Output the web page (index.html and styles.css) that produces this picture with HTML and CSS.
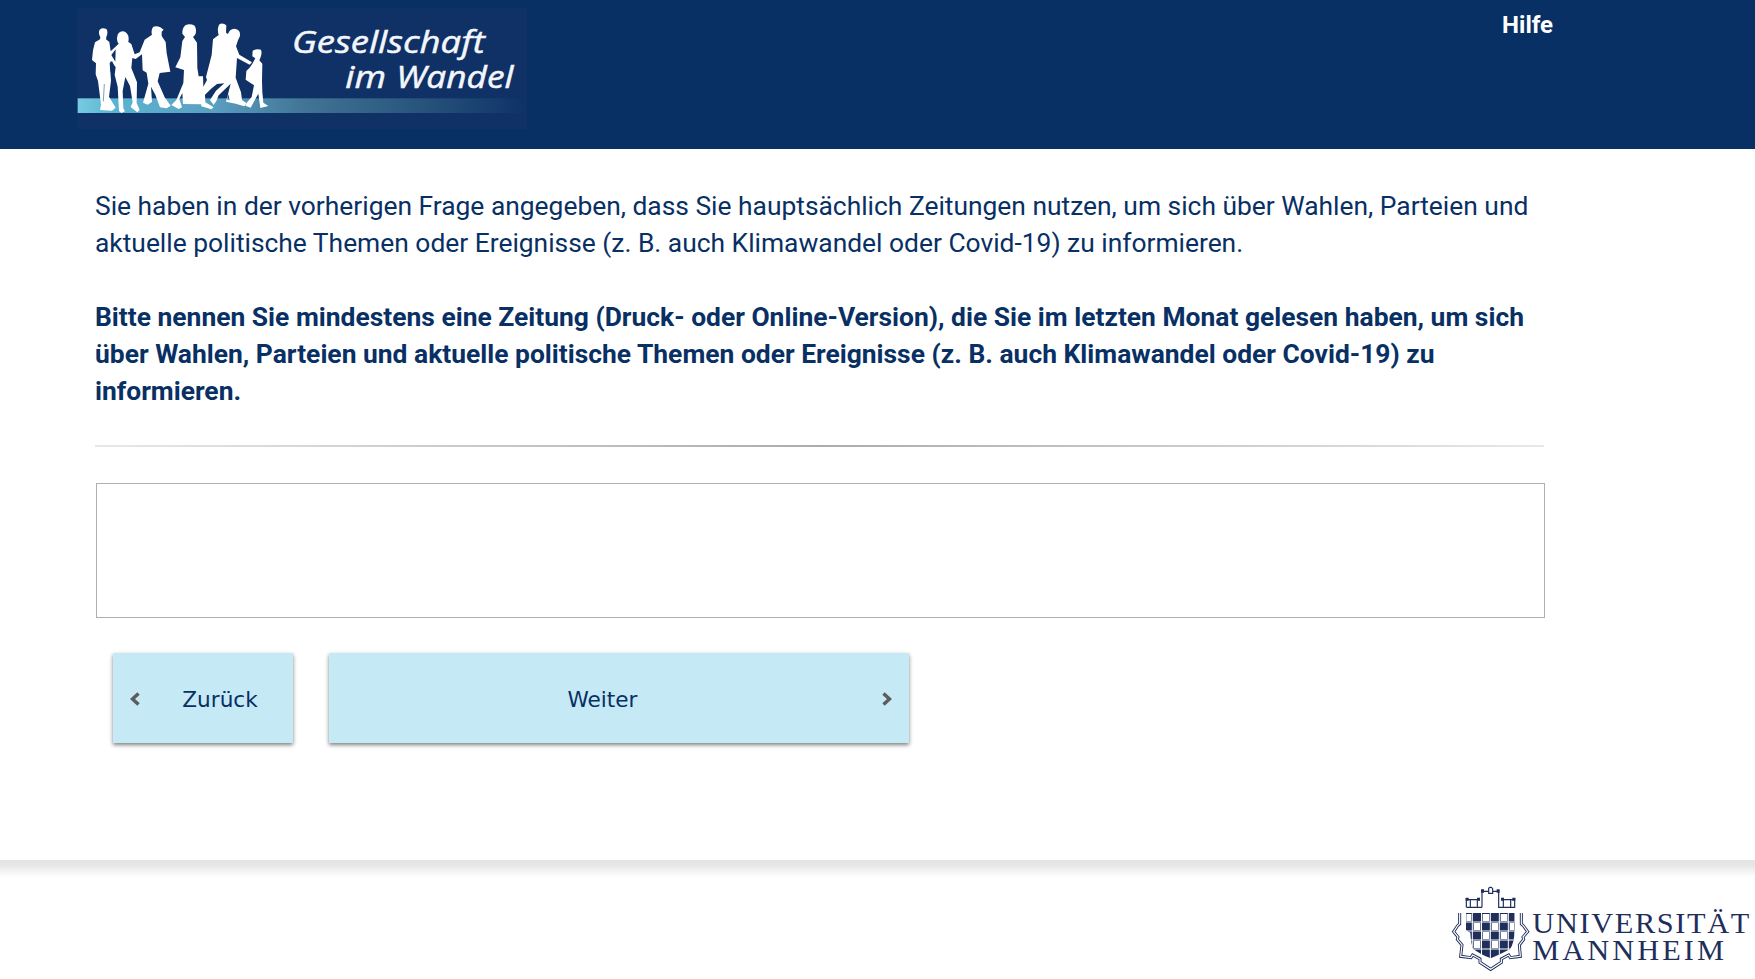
FILE: index.html
```html
<!DOCTYPE html>
<html lang="de">
<head>
<meta charset="utf-8">
<title>Gesellschaft im Wandel</title>
<link rel="stylesheet" href="styles.css">
</head>
<body>
<header class="header">
  <svg class="logo" viewBox="21 24 1350 363" role="img" aria-label="Gesellschaft im Wandel">
    <defs>
      <linearGradient id="band" x1="0" x2="1" y1="0" y2="0">
        <stop offset="0" stop-color="#76cbe1"/>
        <stop offset=".08" stop-color="#5cb4d0"/>
        <stop offset=".3" stop-color="#5a9fc1"/>
        <stop offset=".5" stop-color="#427596"/>
        <stop offset=".78" stop-color="#26527a"/>
        <stop offset="1" stop-color="#0f3166"/>
      </linearGradient>
    </defs>
    <rect x="21" y="24" width="1350" height="363" fill="#0f3166"/>
    <rect x="23" y="295" width="1348" height="44" fill="url(#band)"/>
    <g class="people">
      <path d="M90 118L91 112Q84 98 89 89Q98 81 110 88Q115 98 109 111L108 118L118 126L122 154L139 138L146 131Q138 122 143 104Q151 91 165 95Q179 103 175 126L184 132L194 163L209 157L224 119L246 104Q242 90 250 80Q260 76 271 82L281 89L275 95L275 108L287 126L290 160L301 215L269 219L263 244L284 292L302 317L290 325L270 322L256 284L243 260L246 306L233 314L219 308L235 251L230 218L218 211L216 163L197 177L187 174L184 204L201 247L200 309L209 330L202 337L182 321L188 307L180 258L166 231L158 273L160 325L165 334L154 339L147 333L143 260L134 224L137 201L121 184L121 212L123 242L117 290L137 323L126 332L90 330L93 314L84 243L77 223L78 190L66 180L69 151L75 127Z"/>
      <path d="M345 111L337 101Q336 85 346 76Q359 69 374 77Q382 91 375 105L369 111L381 128L382 204L386 229L399 229L400 260L411 240L408 231L425 165L429 118L446 105Q440 83 449 72Q460 68 469 76L468 98L474 102Q478 87 493 86Q513 89 510 108L504 121L498 139L508 164L546 187L539 194L501 174L497 233L513 277L516 300L530 310L523 319L481 307L474 281L472 300L490 302L489 310L468 305L482 251L446 286L439 303L431 315L420 300L438 272L463 250L441 252L425 265L405 284L406 307L431 322L424 328L394 319L393 313L339 312L337 279L328 297L336 322L326 327L304 315L319 300L340 249L342 210L316 202L331 172L337 123Z"/>
      <path d="M548 152Q557 146 573 149Q577 160 571 174L568 181L577 191L576 243L577 276L580 308L595 318L571 324L565 281L542 323L526 317L530 308L545 291L552 256L527 239L529 213L540 202L548 190L556 175L547 169Z"/>
    </g>
    <g class="people-gaps">
      <path d="M119 190L126 183L133 197L131 229L121 213Z"/>
      <path d="M124 165L137 148L136 185Z"/>
    </g>
    <path class="leg-gap" d="M103 252L100 304"/>
    <g class="logo-text">
      <text x="666" y="160" textLength="578" lengthAdjust="spacingAndGlyphs">Gesellschaft</text>
      <text x="826" y="263" textLength="122" lengthAdjust="spacingAndGlyphs">im</text>
      <text x="979" y="263" textLength="351" lengthAdjust="spacingAndGlyphs">Wandel</text>
    </g>
  </svg>
  <a class="help">Hilfe</a>
</header>
<main class="content">
  <div class="question">
    <p>Sie haben in der vorherigen Frage angegeben, dass Sie hauptsächlich Zeitungen nutzen, um sich über Wahlen, Parteien und<br>aktuelle politische Themen oder Ereignisse (z. B. auch Klimawandel oder Covid-19) zu informieren.</p>
    <p class="strong">Bitte nennen Sie mindestens eine Zeitung (Druck- oder Online-Version), die Sie im letzten Monat gelesen haben, um sich<br>über Wahlen, Parteien und aktuelle politische Themen oder Ereignisse (z. B. auch Klimawandel oder Covid-19) zu<br>informieren.</p>
  </div>
  <div class="divider"></div>
  <textarea class="answer" aria-label="Antwort"></textarea>
  <div class="buttons">
    <button class="btn back"><svg class="chev" viewBox="0 0 10 14"><path d="M8.500 1.500L2.500 7L8.500 12.500"/></svg><span>Zurück</span></button>
    <button class="btn next"><span>Weiter</span><svg class="chev" viewBox="0 0 10 14"><path d="M1.500 1.500L7.500 7L1.500 12.500"/></svg></button>
  </div>
</main>
<footer class="footer">
  <svg class="uni" viewBox="30 90 915 282" role="img" aria-label="Universität Mannheim">
    <g transform="translate(15 75)">
      <clipPath id="shield"><path d="M63 99H209V150Q208 190 195 207Q172 220 137 235Q103 221 84 206Q78 190 76 158L63 150Z"/></clipPath>
      <g clip-path="url(#shield)">
        <rect x="60" y="98" width="152" height="140" fill="#1f2e5b"/>
        <path class="grid" d="M82 98V238M109.500 98V238M136 98V238M163 98V238M190 98V238M60 126H212M60 153H212M60 180H212M60 207H212"/>
        <path class="cells" d="M64 102h15v21h-15zM113 102h20v21h-20zM167 102h20v21h-20zM86 129h20v21h-20zM140 129h20v21h-20zM194 129h13v21h-13zM113 156h20v21h-20zM167 156h20v21h-20zM86 183h20v21h-20zM140 183h20v21h-20z"/>
      </g>
      <g class="lines">
        <path d="M64 82H111M64 54V82M64 59H104M76 59V82M97 59V82M111 82V34H131M142 34H161V82H209V54M168 59H209M175 59V82M197 59V82M131 25L135 22H139L143 26V40H131Z"/>
        <path class="double" d="M44 99V132L38 137L26 155L39 171L37 178L51 195L47 229L78 233L83 225L105 237V247L137 268L169 247V237L191 225L196 233L226 229L223 195L236 178L234 171L248 155L235 137L229 132V99"/>
        <path class="core" d="M44 99V132L38 137L26 155L39 171L37 178L51 195L47 229L78 233L83 225L105 237V247L137 268L169 247V237L191 225L196 233L226 229L223 195L236 178L234 171L248 155L235 137L229 132V99"/>
      </g>
      <path fill="#1f2e5b" d="M62 53h9v9h-9zM96 53h9v9h-9zM108 28h9v10h-9zM155 28h9v10h-9zM168 53h9v9h-9zM202 53h9v9h-9z"/>
    </g>
    <g class="uni-text">
      <text x="277" y="235" textLength="651">UNIVERSITÄT</text>
      <text x="277" y="316" textLength="575">MANNHEIM</text>
    </g>
  </svg>
</footer>
</body>
</html>
```
FILE: styles.css
```css
* { box-sizing: border-box; }
body {
  margin: 0;
  height: 979px;
  display: flex;
  flex-direction: column;
  background: #fff;
  color: #083064;
  font-family: Roboto, sans-serif;
  overflow: hidden;
}
.header {
  flex: none;
  height: 149px;
  padding: 8px 202px 0 77px;
  display: flex;
  justify-content: space-between;
  align-items: flex-start;
  background: #083064;
}
.logo { width: 450px; height: 121px; }
.people { fill: #fff; }
.people-gaps { fill: #0f3166; }
.leg-gap { stroke: #7f9fbd; stroke-width: 3; }
.logo-text {
  fill: #f4f6fa;
  stroke: #f4f6fa;
  stroke-width: 1.500;
  font: italic 92px "Open Sans", sans-serif;
}
.help {
  color: #fff;
  font-size: 24px;
  font-weight: 700;
  line-height: 34px;
}
.content {
  flex: none;
  height: 711px;
  padding: 39px 210px 0 95px;
}
.question {
  font-size: 26.4px;
  line-height: 37px;
  white-space: nowrap;
}
.question p {
  margin: 0 0 37px;
  letter-spacing: -.008px;
}
.question .strong {
  margin-bottom: 35px;
  font-weight: 700;
  letter-spacing: .008px;
}
.divider {
  width: 1449px;
  height: 2px;
  background: linear-gradient(90deg, #e8e8e8, #acacac 50%, #e8e8e8);
}
.answer {
  display: block;
  width: 1449px;
  height: 135px;
  margin: 36px 0 0 1px;
  border: 1px solid #afafaf;
  background: #fff;
  resize: none;
}
.buttons {
  display: flex;
  gap: 36px;
  padding: 35px 0 0 18px;
}
.btn {
  height: 90px;
  padding: 2px 17px 0;
  display: flex;
  align-items: center;
  border: 0;
  background: #c5e9f5;
  box-shadow: 0 2px 4px rgba(0, 0, 0, .5);
  color: #083064;
  font: 21.6px "DejaVu Sans", sans-serif;
}
.back { width: 180px; }
.next { width: 580px; }
.btn span { flex: 1; text-align: center; }
.back span { padding-left: 24px; }
.next span { padding-right: 23px; }
.chev {
  width: 10px;
  height: 14px;
  fill: none;
  stroke: #5c5c5c;
  stroke-width: 3.500;
}
.footer {
  flex: 1;
  display: flex;
  justify-content: flex-end;
  align-items: flex-start;
  padding-top: 25px;
  background: linear-gradient(#e2e2e2, #e8e8e8 6px, #fff 17px);
}
.uni { width: 305px; height: 94px; flex: none; }
.grid { stroke: #fff; stroke-width: 3; fill: none; }
.cells { fill: #fff; }
.lines { fill: none; stroke: #1f2e5b; stroke-width: 3.500; }
.lines .double { stroke-width: 9; }
.lines .core { stroke: #fff; stroke-width: 3.500; }
.uni-text {
  fill: #1f2e5b;
  font: 91px "Liberation Serif", serif;
}
```
